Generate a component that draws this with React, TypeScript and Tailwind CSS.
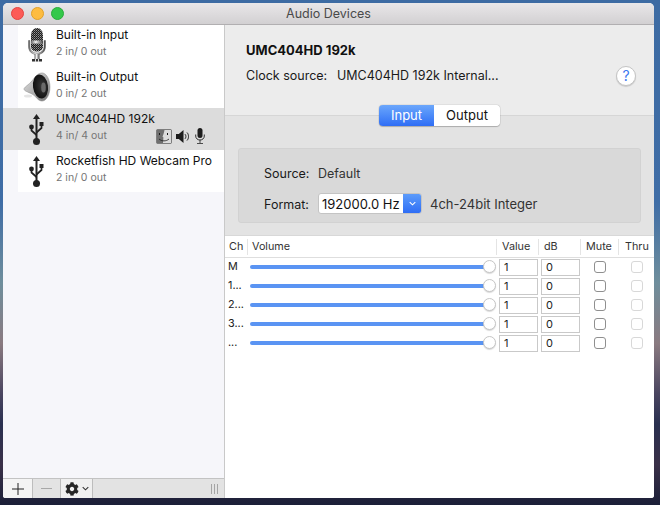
import React from "react";
import { FaCog } from "react-icons/fa";

const UsbIcon = ({ className = "" }: { className?: string }) => (
  <svg viewBox="0 0 15 31" className={className}>
    <path d="M7.500 0L11 5H4z" fill="#222" />
    <path d="M7.500 4v23" stroke="#222" strokeWidth="2" />
    <circle cx="7.500" cy="27.500" r="3.500" fill="#222" />
    <circle cx="2.500" cy="13" r="2.400" fill="#222" />
    <path d="M2.500 13v3.500l5 4.500" fill="none" stroke="#222" strokeWidth="1.700" />
    <rect x="10.500" y="8" width="4" height="4" fill="#222" />
    <path d="M12.500 12v2l-5 4.500" fill="none" stroke="#222" strokeWidth="1.700" />
  </svg>
);

const BigMic = () => (
  <svg viewBox="0 0 22 34" className="w-[22px] h-[34px]">
    <defs>
      <pattern id="mesh" width="2" height="2" patternUnits="userSpaceOnUse">
        <rect width="2" height="2" fill="#1c1c1c" />
        <rect width="1" height="1" fill="#999" />
        <rect x="1" y="1" width="1" height="1" fill="#666" />
      </pattern>
      <linearGradient id="chrome" x1="0" x2="1" y1="0" y2="0">
        <stop offset="0" stopColor="#666" />
        <stop offset="0.4" stopColor="#eee" />
        <stop offset="1" stopColor="#444" />
      </linearGradient>
    </defs>
    <path d="M5 8c0-5 2.500-8 6-8s6 3 6 8v5H5z" fill="url(#mesh)" />
    <rect x="5" y="12.500" width="12" height="3" fill="url(#chrome)" />
    <path d="M5 15.500h12v3c0 3-2.500 5-6 5s-6-2-6-5z" fill="url(#mesh)" />
    <path d="M2.500 12.500v6c0 5 3.500 8 8.500 8s8.500-3 8.500-8v-6h-1.500v6c0 4-3 6.500-7 6.500s-7-2.500-7-6.500v-6z" fill="url(#chrome)" stroke="#444" strokeWidth="0.400" />
    <rect x="8.500" y="26" width="5" height="5" fill="url(#chrome)" />
    <path d="M6 31h10v2.500H6z" fill="#333" />
    <path d="M9 31h1v3H9zM12 31h1v3h-1z" fill="#ddd" />
  </svg>
);

const BigSpeaker = () => (
  <svg viewBox="0 0 28 32" className="w-[28px] h-[32px]">
    <defs>
      <linearGradient id="rim" x1="0" x2="1" y1="0" y2="1">
        <stop offset="0" stopColor="#e4e4e4" />
        <stop offset="0.6" stopColor="#a8a8a8" />
        <stop offset="1" stopColor="#6e6e6e" />
      </linearGradient>
      <radialGradient id="cone" cx="0.6" cy="0.5" r="0.65">
        <stop offset="0" stopColor="#3a3a3a" />
        <stop offset="0.6" stopColor="#1c1c1c" />
        <stop offset="1" stopColor="#0c0c0c" />
      </radialGradient>
    </defs>
    <path d="M1 18c0-1.500 3-3 7-7 3-3 5-8 10-9 5-1 9 6 9 14s-4 15-9 14c-4-1-5-5-9-7-4-2-8-3-8-5z" fill="url(#rim)" stroke="#8a8a8a" strokeWidth="0.500" />
    <ellipse cx="17.500" cy="15.500" rx="7.500" ry="12" fill="url(#cone)" transform="rotate(-8 17.500 15.500)" />
    <ellipse cx="20.500" cy="16.500" rx="2.300" ry="5" fill="#6a6a6a" />
    <ellipse cx="5" cy="25" rx="4" ry="1.500" fill="#ccc" opacity="0.500" />
  </svg>
);

const FinderBadge = () => (
  <svg viewBox="0 0 16 15" className="w-[16px] h-[15px]">
    <rect x="0.500" y="0.500" width="15" height="14" rx="1" fill="#6f6f6f" stroke="#555" strokeWidth="0.500" />
    <path d="M8.500 1H15v13H7c0-2 .500-4 .300-6H6.500c.500-2 1.500-4 2-7z" fill="#dcdcdc" />
    <path d="M3.500 4v2M11.500 4v2" stroke="#1a1a1a" strokeWidth="1" />
    <path d="M3 10c3 2.500 7 2.500 10 0" stroke="#1a1a1a" strokeWidth="0.800" fill="none" />
  </svg>
);

const SmallSpeaker = () => (
  <svg viewBox="0 0 15 13" className="w-[15px] h-[13px]" fill="#1d1d1d">
    <path d="M0 4h2.800L7.500 0v13L2.800 9H0z" />
    <path d="M9 4.200c1.200 1.200 1.200 3.400 0 4.600M11 2.500c2 2 2 6 0 8" stroke="#1d1d1d" strokeWidth="1" fill="none" />
  </svg>
);

const SmallMic = () => (
  <svg viewBox="0 0 10 16" className="w-[10px] h-[16px]" fill="#1d1d1d">
    <rect x="2.500" y="0" width="5" height="10" rx="2.500" />
    <path d="M.700 6.500v1.500c0 2.500 2 4 4.300 4s4.300-1.500 4.300-4V6.500" fill="none" stroke="#1d1d1d" strokeWidth="0.900" />
    <path d="M4.600 12h.800v3h-.800zM2 15h6v.800H2z" />
  </svg>
);

const devices = [
  { name: "Built-in Input", sub: "2 in/ 0 out", icon: <BigMic /> },
  { name: "Built-in Output", sub: "0 in/ 2 out", icon: <BigSpeaker /> },
  { name: "UMC404HD 192k", sub: "4 in/ 4 out", icon: <UsbIcon className="w-[15px] h-[31px]" />, selected: true },
  { name: "Rocketfish HD Webcam Pro", sub: "2 in/ 0 out", icon: <UsbIcon className="w-[15px] h-[31px]" /> },
];

const channels = ["M", "1...", "2...", "3...", "..."];

const headers = [
  { label: "Ch", cls: "pl-[4px] border-r border-[#e4e4e4] my-[2px]" },
  { label: "Volume", cls: "pl-[4px] border-r border-[#e4e4e4] my-[2px]" },
  { label: "Value", cls: "pl-[5px] border-r border-[#e4e4e4] my-[2px]" },
  { label: "dB", cls: "pl-[5px] border-r border-[#e4e4e4] my-[2px]" },
  { label: "Mute", cls: "pl-[5px] border-r border-[#e4e4e4] my-[2px]" },
  { label: "Thru", cls: "pl-[6px]" },
];

const Sidebar = () => (
  <div className="w-[222px] shrink-0 flex flex-col border-r border-[#c9c9c9] bg-[#f6f6fa]">
    <div className="flex-1 -mt-px">
      {devices.map((d) => (
        <div
          key={d.name}
          className={`h-[42px] flex pl-[15px] ${d.selected ? "bg-[#dcdcdc]" : ""}`}
        >
          <div className={`flex-1 flex ${d.selected ? "" : "bg-white"}`}>
            <div className="w-[38px] shrink-0 pr-[1px] flex items-center justify-center">{d.icon}</div>
            <div className="flex-1 relative pt-[3px]">
              <div className="text-[12px] leading-[16px] text-[#111] whitespace-nowrap">{d.name}</div>
              <div className="text-[10.500px] leading-[14px] mt-[2px] text-[#757575]">{d.sub}</div>
              {d.selected && (
                <div className="absolute right-[19px] top-[20px] flex items-center gap-[4px]">
                  <FinderBadge />
                  <SmallSpeaker />
                  <SmallMic />
                </div>
              )}
            </div>
          </div>
        </div>
      ))}
    </div>
    <div className="h-[20px] flex items-stretch border-t border-[#c3c3c3] bg-[#e3e3e3]">
      <div className="w-[30px] bg-[#f4f4f4] border-r border-[#bdbdbd] flex items-center justify-center">
        <svg viewBox="0 0 12 12" className="w-[12px] h-[12px]">
          <path d="M6 0v12M0 6h12" stroke="#222" strokeWidth="1" />
        </svg>
      </div>
      <div className="w-[28px] border-r border-[#bdbdbd] flex items-center justify-center">
        <div className="w-[11px] h-px bg-[#a8a8a8]" />
      </div>
      <div className="w-[32px] bg-[#f0f0f0] border-r border-[#bdbdbd] flex items-center justify-center gap-[3px]">
        <FaCog className="w-[14px] h-[14px] text-[#262626]" />
        <svg viewBox="0 0 8 5" className="w-[7px] h-[5px]">
          <path d="M.8.800L4 4l3.200-3.200" fill="none" stroke="#333" strokeWidth="1.200" />
        </svg>
      </div>
      <div className="flex-1 flex items-center justify-end pr-[6px] gap-[2px]">
        <div className="w-px h-[10px] bg-[#a5a5a5]" />
        <div className="w-px h-[10px] bg-[#a5a5a5]" />
        <div className="w-px h-[10px] bg-[#a5a5a5]" />
      </div>
    </div>
  </div>
);

const Header = () => (
  <div className="h-[91px] bg-[#ececec] pl-[21px] pr-[18px] pt-[17px] border-b border-[#d6d6d6] relative">
    <div className="text-[13px] leading-[16px] font-bold text-[#111]">UMC404HD 192k</div>
    <div className="flex items-center mt-[8px] text-[12.500px] leading-[16px] text-[#1a1a1a]">
      <span className="w-[91px]">Clock source:</span>
      <span className="flex-1">UMC404HD 192k Internal...</span>
      <div className="w-[20px] h-[20px] rounded-full bg-white border border-[#c4c4c4] shadow-[0_1px_1px_rgba(0,0,0,0.15)] flex items-center justify-center text-[14px] text-[#3b78f0]">
        ?
      </div>
    </div>
    <div className="absolute left-[154px] top-[80px] flex h-[21px] text-[13px] rounded-[4px] overflow-hidden shadow-[0_0_1px_rgba(0,0,0,0.5),0_1px_1px_rgba(0,0,0,0.2)]">
      <div className="w-[55px] flex items-center justify-center text-white bg-gradient-to-b from-[#6ba6fb] to-[#2f6df5]">Input</div>
      <div className="w-[66px] flex items-center justify-center text-[#111] bg-white">Output</div>
    </div>
  </div>
);

const FormatPanel = () => (
  <div className="h-[120px] bg-[#e3e3e3] pt-[32px] px-[13px] border-b border-[#d8d8d8]">
    <div className="h-[75px] rounded-[3px] bg-[#d9d9d9] border border-[#d2d2d2] pl-[25px] pt-[17px] text-[12.500px] text-[#1a1a1a]">
      <div className="flex items-center h-[16px]">
        <span className="w-[54px]">Source:</span>
        <span className="text-[#333]">Default</span>
      </div>
      <div className="flex items-center mt-[10px]">
        <span className="w-[54px] pt-[4px]">Format:</span>
        <div className="flex w-[104px] h-[21px] rounded-[3px] overflow-hidden border border-[#c4c4c4] bg-white">
          <span className="flex-1 pl-[3px] text-[13px] leading-[21px] text-[#111] whitespace-nowrap">192000.0 Hz</span>
          <div className="w-[18px] bg-gradient-to-b from-[#5c9bfa] to-[#2f6df5] flex items-center justify-center">
            <svg viewBox="0 0 8 5" className="w-[7px] h-[5px]">
              <path d="M.8.800L4 4l3.200-3.200" fill="none" stroke="#fff" strokeWidth="1.200" />
            </svg>
          </div>
        </div>
        <span className="ml-[8px] pt-[2px] text-[13px] text-[#333]">4ch-24bit Integer</span>
      </div>
    </div>
  </div>
);

const Cell = ({ className = "", children }: { className?: string; children?: React.ReactNode }) => (
  <div className={`flex items-center ${className}`}>{children}</div>
);

const columns = "grid grid-cols-[23px_249px_42px_42px_38px_35px]";

const ChannelTable = () => (
  <div className="flex-1 bg-white text-[10.800px] text-[#222]">
    <div className={`${columns} h-[22px] pt-[1px] border-b border-[#dedede] text-[#333]`}>
      {headers.map((h) => (
        <Cell key={h.label} className={h.cls}>
          {h.label}
        </Cell>
      ))}
    </div>
    {channels.map((ch) => (
      <div key={ch + "row"} className={`${columns} h-[19px] pb-[1px]`}>
        <Cell className="pl-[3px]">{ch}</Cell>
        <Cell className="relative pl-[2px]">
          <div className="w-[236px] h-[4px] rounded-full bg-[#5a94f3]" />
          <div className="absolute left-[235px] top-[2px] w-[13px] h-[13px] rounded-full bg-white border border-[#c6c6c6] shadow-[0_1px_1px_rgba(0,0,0,0.15)]" />
        </Cell>
        <Cell className="pl-[2px]">
          <div className="w-[39px] h-[17px] border border-[#c9c9c9] pl-[4px] leading-[15px] text-[11px]">1</div>
        </Cell>
        <Cell className="pl-[2px]">
          <div className="w-[39px] h-[17px] border border-[#c9c9c9] pl-[4px] leading-[15px] text-[11px]">0</div>
        </Cell>
        <Cell className="justify-center pr-[1px]">
          <div className="w-[12px] h-[12px] rounded-[3px] border border-[#8f8f8f] bg-white" />
        </Cell>
        <Cell className="justify-center pl-[1px]">
          <div className="w-[12px] h-[12px] rounded-[3px] border border-[#d8d8d8] bg-white" />
        </Cell>
      </div>
    ))}
  </div>
);

export default function App() {
  return (
    <div
      className="w-[660px] h-[505px] overflow-hidden pt-[3px] pl-[3px] bg-[linear-gradient(180deg,#3d6ba3_0%,#3f6da6_40%,#6f8e9c_56%,#8a7a80_68%,#4a4560_78%,#2a3050_84%,#3a3048_92%,#1b1f38_100%)]"
      style={{ fontFamily: "Inter, 'Liberation Sans', sans-serif" }}
    >
      <div className="w-[651px] h-[495px] flex flex-col rounded-t-[5px] rounded-b-[3px] overflow-hidden bg-white">
        <div className="h-[22px] shrink-0 relative z-10 flex items-center justify-center pt-[1px] border-b border-[#b1afb1] bg-gradient-to-b from-[#e9e7e9] to-[#d2d0d2]">
          <span className="text-[12.500px] text-[#4a4a4a]">Audio Devices</span>
          <div className="absolute left-[8px] top-[4px] flex gap-[7px]">
            <div className="w-[13px] h-[13px] rounded-full bg-[#fc5b57] border border-[#e3443f]" />
            <div className="w-[13px] h-[13px] rounded-full bg-[#fdbc40] border border-[#e0a028]" />
            <div className="w-[13px] h-[13px] rounded-full bg-[#34c84a] border border-[#2aab3b]" />
          </div>
        </div>
        <div className="flex-1 flex min-h-0">
          <Sidebar />
          <div className="flex-1 flex flex-col min-w-0">
            <Header />
            <FormatPanel />
            <ChannelTable />
          </div>
        </div>
      </div>
    </div>
  );
}
